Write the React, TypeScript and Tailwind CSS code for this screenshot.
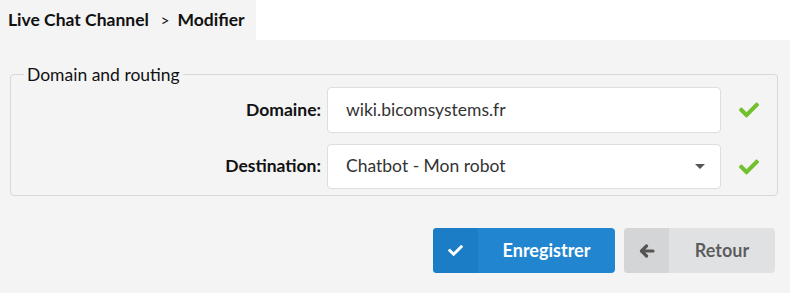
import React from "react";
import { FaCheck } from "react-icons/fa";

function Check() {
  return (
    <div className="w-[56px] flex justify-center">
      <FaCheck className="text-[#72c02c]" size={20} />
    </div>
  );
}

export default function App() {
  return (
    <div className="w-[790px] h-[293px] bg-white text-[rgba(0,0,0,0.87)]" style={{ fontFamily: "Lato, 'Open Sans', sans-serif" }}>
      <div className="flex h-[40px]">
        <div className="w-[256px] h-[40px] bg-[#f4f4f4] flex items-center pl-[8px] text-[17.5px] font-bold text-[#111]">
          <span>Live Chat Channel</span>
          <span className="ml-[12px] mr-[8px] font-normal text-[15px]">&gt;</span>
          <span>Modifier</span>
        </div>
      </div>
      <div className="bg-[#f4f4f4] h-[253px] pl-[10px] pr-[14px] pt-[24px]">
        <fieldset className="border border-[#d8d8d8] rounded-[4px] pl-[13px] pr-0 pb-[6px] pt-[2px] m-0">
          <legend className="px-[3px] text-[17.5px] text-[#111] leading-[21px]">Domain and routing</legend>
          <div className="flex flex-col gap-[11px]">
            <div className="flex items-center">
              <label className="w-[303px] text-right pr-[6px] text-[17.5px] font-bold text-[#111]">Domaine:</label>
              <div className="w-[394px] h-[46px] bg-white border border-[#dedede] rounded-[4px] flex items-center pl-[18px] text-[17.5px] text-[#333]">
                wiki.bicomsystems.fr
              </div>
              <Check />
            </div>
            <div className="flex items-center">
              <label className="w-[303px] text-right pr-[6px] text-[17.5px] font-bold text-[#111]">Destination:</label>
              <div className="w-[394px] h-[45px] bg-white border border-[#dedede] rounded-[4px] flex items-center pl-[18px] pr-[15px] text-[17.5px] text-[#333]">
                <span className="flex-1">Chatbot - Mon robot</span>
                <span className="w-0 h-0 border-l-[5px] border-r-[5px] border-t-[5px] border-l-transparent border-r-transparent border-t-[#555]" />
              </div>
              <Check />
            </div>
          </div>
        </fieldset>
        <div className="flex justify-end gap-[9px] mt-[32px] pr-[1px]">
          <button className="flex h-[45px] w-[182px] rounded-[4px] bg-[#2185d0] text-white font-bold text-[18px] overflow-hidden">
            <span className="w-[45px] h-full bg-[#1a7dc6] flex items-center justify-center">
              <FaCheck size={15} />
            </span>
            <span className="flex-1 flex items-center justify-center">Enregistrer</span>
          </button>
          <button className="flex h-[45px] w-[151px] rounded-[4px] bg-[#e0e1e2] text-[rgba(0,0,0,0.6)] font-bold text-[18px] overflow-hidden">
            <span className="w-[45px] h-full bg-[#d4d5d7] flex items-center justify-center">
              <svg width="16" height="14" viewBox="0 0 16 14" fill="none" stroke="#555" strokeWidth="3.2" strokeLinecap="round" strokeLinejoin="round">
                <polyline points="7.5,2 2.5,7 7.5,12" />
                <line x1="3" y1="7" x2="14" y2="7" />
              </svg>
            </span>
            <span className="flex-1 flex items-center justify-center">Retour</span>
          </button>
        </div>
      </div>
    </div>
  );
}
